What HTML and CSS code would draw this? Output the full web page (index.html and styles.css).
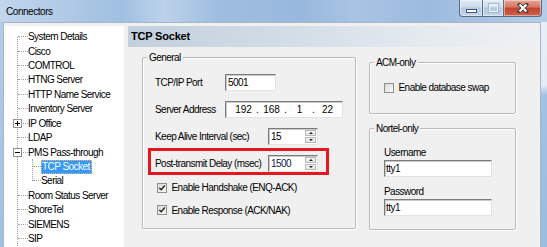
FILE: index.html
```html
<!DOCTYPE html>
<html lang="en">
<head>
    <meta charset="UTF-8">
    <title>Connectors</title>
    <link rel="stylesheet" href="styles.css">
</head>
<body>

<div class="window">
    <div class="titlebar">
        <span class="title">Connectors</span>
        <div class="caption">
            <span class="cbtn min"><i></i></span>
            <span class="cbtn max"><i></i></span>
            <span class="cbtn close">
                <svg width="12" height="10" viewBox="0 0 12 10">
                    <path d="M2.5 1.5l7 7M9.5 1.5l-7 7" stroke="#3b3b3b" stroke-width="3.6" stroke-linecap="square"/>
                    <path d="M2.5 1.5l7 7M9.5 1.5l-7 7" stroke="#fff" stroke-width="2"/>
                </svg>
            </span>
        </div>
    </div>

    <div class="client">
        <!-- connector tree -->
        <div class="tree">
            <ul class="nodes">
                <li><div class="node"><span class="conn"></span>System Details</div></li>
                <li><div class="node"><span class="conn"></span>Cisco</div></li>
                <li><div class="node"><span class="conn"></span>COMTROL</div></li>
                <li><div class="node"><span class="conn"></span>HTNG Server</div></li>
                <li><div class="node"><span class="conn"></span>HTTP Name Service</div></li>
                <li><div class="node"><span class="conn"></span>Inventory Server</div></li>
                <li><div class="node"><span class="conn"><svg class="exp" width="9" height="9"><rect x=".5" y=".5" width="8" height="8" fill="#fff" stroke="#919191"/><path d="M2 4.5h5M4.5 2v5" stroke="#000"/></svg></span>IP Office</div></li>
                <li><div class="node"><span class="conn"></span>LDAP</div></li>
                <li>
                    <div class="node"><span class="conn"><svg class="exp" width="9" height="9"><rect x=".5" y=".5" width="8" height="8" fill="#fff" stroke="#919191"/><path d="M2 4.5h5" stroke="#000"/></svg></span>PMS Pass-through</div>
                    <ul class="children">
                        <li><div class="node"><span class="conn short"></span><span class="sel">TCP Socket</span></div></li>
                        <li><div class="node"><span class="conn short"></span>Serial</div></li>
                    </ul>
                </li>
                <li><div class="node"><span class="conn"></span>Room Status Server</div></li>
                <li><div class="node"><span class="conn"></span>ShoreTel</div></li>
                <li><div class="node"><span class="conn"></span>SIEMENS</div></li>
                <li><div class="node"><span class="conn"></span>SIP</div></li>
            </ul>
        </div>

        <div class="main">
            <div class="header">TCP Socket</div>
            <div class="panes">
                <div class="group general">
                    <span class="legend">General</span>
                    <div class="field">
                        <span class="lbl">TCP/IP Port</span>
                        <span class="input port">5001</span>
                    </div>
                    <div class="field">
                        <span class="lbl">Server Address</span>
                        <span class="input ip">
                            <span class="oct">192</span><span class="dot">.</span>
                            <span class="oct">168</span><span class="dot">.</span>
                            <span class="oct">1</span><span class="dot">.</span>
                            <span class="oct">22</span>
                        </span>
                    </div>
                    <div class="field wide">
                        <span class="lbl">Keep Alive Interval (sec)</span>
                        <span class="input spinbox"><span class="val">15</span><span class="spin"><b class="up"></b><b class="down"></b></span></span>
                    </div>
                    <div class="field wide marked">
                        <span class="lbl">Post-transmit Delay (msec)</span>
                        <span class="input spinbox"><span class="val dark">1500</span><span class="spin"><b class="up"></b><b class="down"></b></span></span>
                    </div>
                    <div class="cb-row first">
                        <span class="box"><svg width="8" height="8" viewBox="0 0 8 8"><path d="M1.3 3.9l1.9 1.9 3.5-4.3" fill="none" stroke="#222" stroke-width="1.4"/></svg></span>
                        <span>Enable Handshake (ENQ-ACK)</span>
                    </div>
                    <div class="cb-row">
                        <span class="box"><svg width="8" height="8" viewBox="0 0 8 8"><path d="M1.3 3.9l1.9 1.9 3.5-4.3" fill="none" stroke="#222" stroke-width="1.4"/></svg></span>
                        <span>Enable Response (ACK/NAK)</span>
                    </div>
                </div>

                <div class="side">
                    <div class="group acm">
                        <span class="legend">ACM-only</span>
                        <div class="cb-row">
                            <span class="box"></span>
                            <span>Enable database swap</span>
                        </div>
                    </div>
                    <div class="group nortel">
                        <span class="legend">Nortel-only</span>
                        <div class="caption-lbl">Username</div>
                        <div class="input text">tty1</div>
                        <div class="caption-lbl">Password</div>
                        <div class="input text">tty1</div>
                    </div>
                </div>
            </div>
        </div>
    </div>
</div>

</body>
</html>
```

FILE: styles.css
```css
body {
    margin: 0;
    font-family: "Liberation Sans", Arial, sans-serif;
    font-size: 10px;
    letter-spacing: -0.55px;
    color: #000;
}
.window {
    width: 547px;
    height: 247px;
    overflow: hidden;
    display: flex;
    flex-direction: column;
    background:
        linear-gradient(to bottom, #e9eff6 0, #e4ecf5 85px, #a3c1e3 95px, #9cbce0 100%) right top / 7px 100% no-repeat,
        linear-gradient(to bottom, #b4cde9, #a2c0e2);
}

/* title bar */
.titlebar {
    height: 22px;
    flex: none;
    display: flex;
    background: linear-gradient(to right, #c1d6ed 0, #b0c9e6 12%, #a0bfe1 22%, #bcd2eb 30%, #9fbde0 40%, #98b8dd 55%, #a9c4e4 65%, #9cbbdf 78%, #b5cde9 100%);
}
.title {
    padding-left: 6px;
    line-height: 23px;
    letter-spacing: -0.45px;
}
.caption {
    display: flex;
    margin-left: auto;
    margin-right: 5px;
    height: 17px;
}
.cbtn {
    box-sizing: border-box;
    height: 17px;
    display: flex;
    align-items: center;
    justify-content: center;
    border: 1px solid #5b6b80;
    border-top: none;
    box-shadow: inset 0 0 0 1px rgba(255, 255, 255, 0.45);
}
.cbtn.min {
    width: 23px;
    border-radius: 0 0 0 4px;
    border-right: none;
    background: linear-gradient(#dfe9f4, #ccdbed 45%, #b3c9e2 50%, #c2d5ec);
}
.cbtn.max {
    width: 21px;
    border-right: none;
    background: linear-gradient(#dfe9f4, #ccdbed 45%, #b3c9e2 50%, #c2d5ec);
}
.cbtn.close {
    width: 39px;
    border-radius: 0 0 4px 0;
    background: linear-gradient(#e7a596, #d67462 45%, #c3432f 50%, #d0604d);
}
.min i {
    width: 9px;
    height: 2px;
    margin-top: 5px;
    background: #fff;
    border: 1px solid #46556a;
}
.max i {
    width: 7px;
    height: 5px;
    border: 1px solid #eef3f9;
    border-top-width: 2px;
    box-shadow: 0 0 0 1px #a5b6cb;
}

/* client area */
.client {
    flex: 1;
    display: flex;
    margin: 0 6px 0 3px;
    padding-top: 3px;
    border: 1px solid #a7b5c6;
    border-bottom: none;
    background: #f0f0f0;
}

/* tree */
.tree {
    flex: none;
    width: 120px;
    padding-top: 3.5px;
    background: #fff;
    overflow: hidden;
}
.nodes, .children {
    list-style: none;
    padding: 0;
    display: flex;
    flex-direction: column;
    border-left: 1px dotted #a0a0a0;
}
.nodes {
    margin: 7px 0 0 13px;
    padding-bottom: 20px;
}
.nodes > li:first-child {
    margin-top: -7px;
}
.children {
    margin: 0 0 7.2px 14px;
}
.children > li:last-child {
    margin-bottom: -7.2px;
}
.node {
    display: flex;
    align-items: center;
    height: 14.43px;
    white-space: nowrap;
}
.conn {
    flex: none;
    width: 10px;
    height: 0;
    border-top: 1px dotted #a0a0a0;
    display: flex;
    align-items: center;
}
.conn.short {
    width: 8px;
}
.exp {
    flex: none;
    margin-left: -5px;
}
.sel {
    margin-left: 0;
    padding: 0 2px 0 1px;
    line-height: 14px;
    color: #fff;
    background: #3399ff;
    outline: 1px dotted #e9b872;
    outline-offset: -1px;
}

/* right side */
.main {
    flex: 1;
    margin-left: 4px;
    display: flex;
    flex-direction: column;
}
.header {
    height: 21px;
    line-height: 21px;
    margin-right: 3px;
    padding-left: 3px;
    font-size: 11px;
    font-weight: bold;
    letter-spacing: -0.2px;
    background: linear-gradient(to right, #c2cfdd, #d3dde7 40%, #e6ebf0 75%, #eef1f4);
}
.panes {
    display: flex;
    padding-left: 14px;
}
.group {
    position: relative;
    box-sizing: border-box;
    border: 1px solid #b9b9b9;
    border-radius: 2px;
    box-shadow: inset 1px 1px 0 #fff, 1px 1px 0 #fff;
}
.legend {
    position: absolute;
    top: -7px;
    left: 4px;
    padding: 0 2px;
    line-height: 13px;
    background: #f0f0f0;
}
.general {
    width: 214px;
    height: 172px;
    margin-top: 10px;
    padding: 16px 0 0 12px;
}
.side {
    margin-left: 13px;
    width: 147px;
}
.acm {
    height: 52px;
    margin-top: 15px;
    padding: 18px 0 0 14px;
}
.nortel {
    height: 102px;
    margin-top: 14px;
    padding: 17px 0 0 14px;
}

/* fields */
.field {
    display: flex;
    align-items: center;
    height: 17px;
    margin-bottom: 10px;
}
.field .lbl {
    flex: none;
    width: 70px;
}
.field.wide .lbl {
    width: 113px;
}
.field.marked {
    width: 163px;
    padding: 4px 8px 0 4px;
    margin: -7px 0 6px -7px;
    border: 3px solid #e5171f;
}
.input {
    box-sizing: border-box;
    height: 17px;
    line-height: 15px;
    padding: 0 2px;
    background: #fff;
    border: 1px solid #e3e3e3;
    border-top-color: #7b7b7b;
    border-left-color: #7b7b7b;
    box-shadow: inset 1px 1px 0 #c9c9c9;
}
.input.port {
    width: 51px;
}
.input.ip {
    width: 118px;
    display: flex;
    padding-left: 6px;
    letter-spacing: 0;
}
.oct {
    width: 23px;
    text-align: center;
}
.dot {
    width: 5px;
    text-align: center;
}
.spinbox {
    width: 50px;
    display: flex;
    padding-right: 1px;
}
.val {
    flex: 1;
}
.val.dark {
    color: #14145a;
}
.spin {
    width: 11px;
    display: flex;
    flex-direction: column;
    padding: 1px 0;
    gap: 1px;
}
.spin b {
    flex: 1;
    display: flex;
    align-items: center;
    justify-content: center;
    background: linear-gradient(#f6f6f6, #e4e4e4);
    border: 1px solid #b7b7b7;
}
.spin b::after {
    content: "";
    border-left: 2px solid transparent;
    border-right: 2px solid transparent;
}
.spin .up::after {
    border-bottom: 2px solid #222;
}
.spin .down::after {
    border-top: 2px solid #222;
}

/* checkboxes */
.cb-row {
    display: flex;
    align-items: center;
    height: 13px;
}
.general .cb-row {
    margin-left: 2px;
}
.cb-row.first {
    margin-bottom: 9.5px;
}
.box {
    flex: none;
    box-sizing: border-box;
    width: 10px;
    height: 10px;
    margin-right: 4.5px;
    display: flex;
    align-items: center;
    justify-content: center;
    border: 1px solid #8e8f8f;
    background: linear-gradient(135deg, #d9d9d9, #fbfbfb);
}

/* nortel */
.caption-lbl {
    line-height: 13px;
    margin-bottom: 1px;
}
.input.text {
    width: 108px;
    padding-left: 1px;
    margin-bottom: 7.5px;
}
```
